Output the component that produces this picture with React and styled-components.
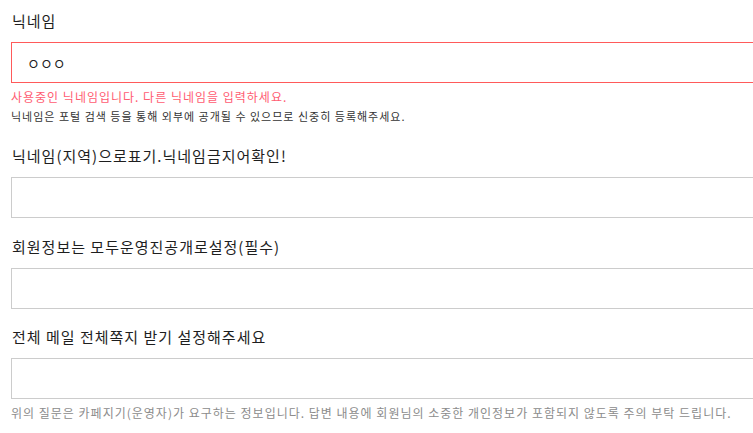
import React from 'react';
import styled, { createGlobalStyle } from 'styled-components';

const GlobalStyle = createGlobalStyle`
  html, body {
    margin: 0;
    padding: 0;
    overflow: hidden;
    background: #ffffff;
  }
  body {
    font-family: "Noto Sans CJK KR", "Noto Sans", sans-serif;
    color: #222222;
  }
`;

const fields = [
  {
    label: '닉네임',
    value: 'ㅇㅇㅇ',
    error: '사용중인 닉네임입니다. 다른 닉네임을 입력하세요.',
    help: '닉네임은 포털 검색 등을 통해 외부에 공개될 수 있으므로 신중히 등록해주세요.',
  },
  { label: '닉네임(지역)으로표기.닉네임금지어확인!' },
  { label: '회원정보는 모두운영진공개로설정(필수)' },
  { label: '전체 메일 전체쪽지 받기 설정해주세요' },
];

const App = function () {
  return (
    <>
      <GlobalStyle />
      <Form>
        {fields.map((field) => (
          <Field key={field.label} $spaced={!field.help}>
            <Label>{field.label}</Label>
            <Input $invalid={!!field.error}>{field.value}</Input>
            {field.error && <ErrorText>{field.error}</ErrorText>}
            {field.help && <HelpText>{field.help}</HelpText>}
          </Field>
        ))}
        <Notice>
          위의 질문은 카페지기(운영자)가 요구하는 정보입니다. 답변 내용에 회원님의 소중한 개인정보가 포함되지 않도록 주의 부탁 드립니다.
        </Notice>
      </Form>
    </>
  );
};

export default App;

const Form = styled.div`
  width: 760px;
  padding: 11px 0 0 11px;
  display: flex;
  flex-direction: column;
`;

const Field = styled.div`
  display: flex;
  flex-direction: column;
  margin-bottom: ${(props) => (props.$spaced ? '18.5px' : '22px')};

  &:last-of-type {
    margin-bottom: 0;
  }
`;

const Label = styled.div`
  font-size: 15px;
  line-height: 20px;
  letter-spacing: 1px;
  color: #1e1e1e;
  padding-left: 1px;
  margin-bottom: 11px;
  white-space: nowrap;
`;

const Input = styled.div`
  box-sizing: border-box;
  height: 41px;
  border: 1px solid ${(props) => (props.$invalid ? '#ff5a5a' : '#cccccc')};
  padding: 0 15px;
  display: flex;
  align-items: center;
  font-size: 14px;
  letter-spacing: 0;
  color: #222222;
`;

const ErrorText = styled.p`
  margin: 5px 0 0 0;
  font-size: 12px;
  line-height: 18px;
  letter-spacing: 1px;
  color: #ff5c72;
  white-space: nowrap;
`;

const HelpText = styled.p`
  margin: 2px 0 0 0;
  font-size: 11px;
  line-height: 16px;
  letter-spacing: 1px;
  color: #333333;
  white-space: nowrap;
`;

const Notice = styled.p`
  margin: 5px 0 0 0;
  font-size: 12px;
  line-height: 18px;
  letter-spacing: 1px;
  color: #8c8c8c;
  white-space: nowrap;
`;
